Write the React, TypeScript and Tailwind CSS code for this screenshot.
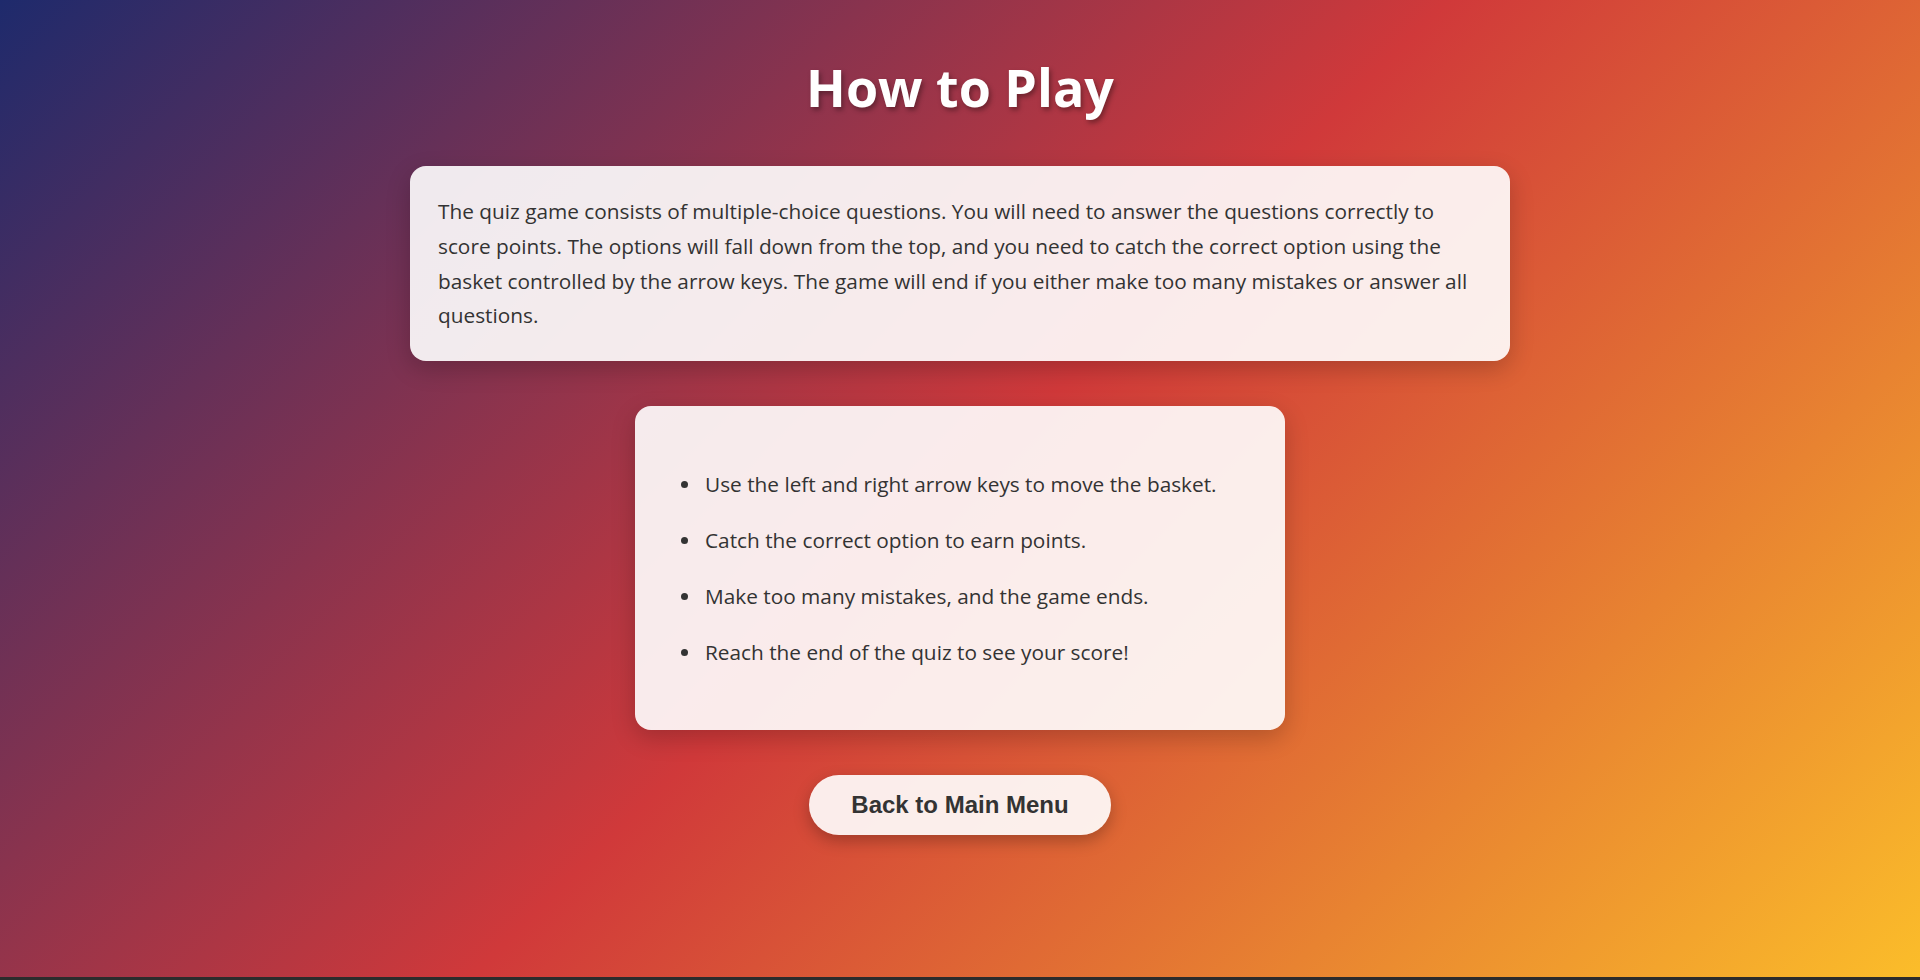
import React from "react";

const rules = [
  "Use the left and right arrow keys to move the basket.",
  "Catch the correct option to earn points.",
  "Make too many mistakes, and the game ends.",
  "Reach the end of the quiz to see your score!",
];

export default function App() {
  return (
    <div className="h-[980px] w-full overflow-hidden bg-[#2c2c2c]">
      <div className="flex h-[977px] w-full flex-col items-center bg-[linear-gradient(135deg,#1e2a6c_0%,#d0393a_50%,#fbbd2a_100%)] pt-[56px] font-['Open_Sans',sans-serif] text-[#333]">
        <h1 className="text-[52px] font-bold leading-[1.2] text-white [text-shadow:2px_3px_5px_rgba(0,0,0,0.35)]">
          How to Play
        </h1>

        <div className="mt-[48px] w-[1100px] rounded-[16px] bg-white/90 p-[28px] shadow-[0_8px_24px_rgba(0,0,0,0.2)]">
          <p className="text-[20.8px] leading-[34.6px]">
            The quiz game consists of multiple-choice questions. You will need to answer the questions correctly to
            score points. The options will fall down from the top, and you need to catch the correct option using the
            basket controlled by the arrow keys. The game will end if you either make too many mistakes or answer all
            questions.
          </p>
        </div>

        <div className="mt-[45px] w-[650px] rounded-[16px] bg-white/90 px-[28px] py-[61px] shadow-[0_8px_24px_rgba(0,0,0,0.2)]">
          <ul className="flex flex-col gap-[21.4px] pl-[18px]">
            {rules.map((r) => (
              <li key={r} className="flex items-center gap-[17px] text-[20.8px] leading-[34.6px]">
                <span className="h-[7px] w-[7px] shrink-0 rounded-full bg-[#333]" />
                <span>{r}</span>
              </li>
            ))}
          </ul>
        </div>

        <button className="mt-[45px] flex h-[60px] items-center rounded-full bg-white/90 px-[42px] font-['Liberation_Sans',Arial,sans-serif] text-[24px] font-bold text-[#333] shadow-[0_6px_16px_rgba(0,0,0,0.25)]">
          Back to Main Menu
        </button>
      </div>
    </div>
  );
}
